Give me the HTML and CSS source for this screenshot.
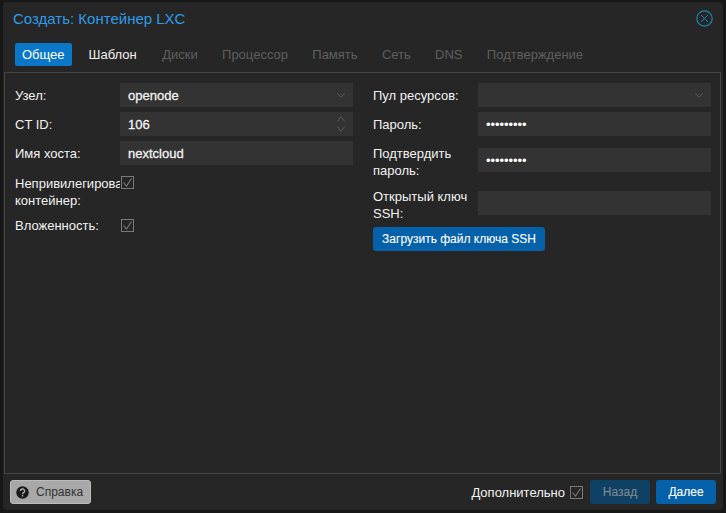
FILE: index.html
```html
<!DOCTYPE html>
<html lang="ru">
<head>
<meta charset="utf-8">
<title>Создать: Контейнер LXC</title>
<link rel="stylesheet" href="styles.css">
</head>
<body>
<div class="window">
  <header class="title-bar">
    <span class="title">Создать: Контейнер LXC</span>
    <svg class="close" width="17" height="17" viewBox="0 0 17 17" fill="none" stroke="#1c84b8" stroke-width="1.2"><circle cx="8.5" cy="8.5" r="7.7"/><path d="M5 5l7 7M12 5l-7 7" stroke-width="1"/></svg>
  </header>
  <nav class="tabs">
    <span class="tab active">Общее</span>
    <span class="tab enabled">Шаблон</span>
    <span class="tab">Диски</span>
    <span class="tab">Процессор</span>
    <span class="tab">Память</span>
    <span class="tab">Сеть</span>
    <span class="tab">DNS</span>
    <span class="tab">Подтверждение</span>
  </nav>
  <main class="panel">
    <section class="col">
      <div class="row"><label class="label">Узел:</label><div class="field"><span class="value">openode</span>
        <svg class="chev" width="8" height="5" viewBox="0 0 8 5" fill="none" stroke="#5c5c5c"><path d="M.3.3L4 4.3 7.7.3"/></svg></div></div>
      <div class="row"><label class="label">CT ID:</label><div class="field"><span class="value">106</span>
        <svg class="spin" width="8" height="16" viewBox="0 0 8 16" fill="none" stroke="#5c5c5c"><path d="M.3 5.5L4 .8l3.7 4.7M.3 10.5L4 15.2l3.7-4.7"/></svg></div></div>
      <div class="row"><label class="label">Имя хоста:</label><div class="field"><span class="value">nextcloud</span></div></div>
      <div class="row row-tall"><label class="label clip">Непривилегированный контейнер:</label>
        <svg class="check" width="13" height="13" viewBox="0 0 13 13" fill="none" stroke="#7a7a7a"><rect x=".5" y=".5" width="12" height="12"/><path d="M2.5 6.5l3 3.5 5-7.5" stroke-width="1.1"/></svg></div>
      <div class="row row-check"><label class="label">Вложенность:</label>
        <svg class="check" width="13" height="13" viewBox="0 0 13 13" fill="none" stroke="#7a7a7a"><rect x=".5" y=".5" width="12" height="12"/><path d="M2.5 6.5l3 3.5 5-7.5" stroke-width="1.1"/></svg></div>
    </section>
    <section class="col">
      <div class="row"><label class="label">Пул ресурсов:</label><div class="field">
        <svg class="chev" width="8" height="5" viewBox="0 0 8 5" fill="none" stroke="#5c5c5c"><path d="M.3.3L4 4.3 7.7.3"/></svg></div></div>
      <div class="row"><label class="label">Пароль:</label><div class="field"><span class="dots">•••••••••</span></div></div>
      <div class="row row-wrap"><label class="label">Подтвердить пароль:</label><div class="field"><span class="dots">•••••••••</span></div></div>
      <div class="row row-wrap"><label class="label">Открытый ключ SSH:</label><div class="field"></div></div>
      <button class="btn upload">Загрузить файл ключа SSH</button>
    </section>
  </main>
  <footer class="footer">
    <button class="help">
      <svg width="13" height="13" viewBox="0 0 13 13"><circle cx="6.5" cy="6.5" r="6.2" fill="#1a1a1a"/><path d="M4.4 5.1a2.1 2 0 1 1 3.2 1.6c-.8.5-1.1.8-1.1 1.5" fill="none" stroke="#b0b0b0" stroke-width="1.4"/><rect x="5.8" y="9" width="1.4" height="1.5" fill="#b0b0b0"/></svg>
      <span>Справка</span>
    </button>
    <span class="advanced">Дополнительно</span>
    <svg class="check" width="13" height="13" viewBox="0 0 13 13" fill="none" stroke="#7a7a7a"><rect x=".5" y=".5" width="12" height="12"/><path d="M2.5 6.5l3 3.5 5-7.5" stroke-width="1.1"/></svg>
    <button class="btn nav disabled">Назад</button>
    <button class="btn nav">Далее</button>
  </footer>
</div>
</body>
</html>
```
FILE: styles.css
```css
* { box-sizing: border-box; }
html, body { margin: 0; height: 100%; }
body {
  background: #171717;
  font: 13px/17px "Liberation Sans", Arial, sans-serif;
  color: #f2f2f2;
  padding: 2px 3px 3px 3px;
  overflow: hidden;
}
.window {
  height: 508px;
  background: #262626;
  border-radius: 4px;
  display: flex;
  flex-direction: column;
}
.title-bar {
  height: 37px;
  padding: 0 10px 4px 10px;
  display: flex;
  align-items: center;
  justify-content: space-between;
}
.title { font-size: 15px; color: #2f9be8; }
.tabs {
  height: 34px;
  padding: 4px 0 0 12px;
  margin: 0 2px 0 1px;
  display: flex;
  border-bottom: 1px solid #444;
}
.tab {
  height: 23px;
  line-height: 23px;
  padding: 0 7px;
  margin-right: 10.3px;
  color: #5f5f5f;
  border-radius: 2px;
}
.tab.active { background: #0a77c9; color: #fff; margin-right: 10px; margin-left: -1px; }
.tab.enabled { color: #f2f2f2; margin-right: 11.5px; }
.panel {
  flex: 1;
  margin: 0 2px 0 1px;
  border-left: 1px solid #444;
  border-right: 1px solid #444;
  padding: 10px 0 0 10px;
  display: grid;
  grid-template-columns: 338px 338px;
  column-gap: 20px;
  align-content: start;
}
.col { display: flex; flex-direction: column; gap: 5px; align-items: flex-start; min-width: 0; }
.row { display: flex; width: 100%; min-height: 24px; align-items: center; }
.label { width: 105px; flex: none; display: block; }
.clip { overflow: hidden; }
.field {
  flex: 1;
  height: 24px;
  background: #333;
  display: flex;
  align-items: center;
  justify-content: space-between;
  padding: 0 8px;
}
.value { color: #f2f2f2; -webkit-text-stroke: .3px #f2f2f2; }
.dots { letter-spacing: -.05px; color: #fff; }
.chev { margin-left: auto; }
.row-tall { align-items: flex-start; min-height: 34px; margin-top: 5px; }
.row-tall .check { margin: 1px 0 0 1px; }
.row-check { margin-top: -1px; }
.row-check .check { margin-left: 1px; }
.row-wrap { align-items: flex-start; min-height: 34px; margin-top: 4px; }
.row-wrap .field { margin-top: 3px; }
.check { flex: none; }
.btn {
  font: inherit;
  font-size: 12px;
  color: #fff;
  background: #0461aa;
  border: 0;
  border-radius: 3px;
  padding: 0;
  -webkit-text-stroke: .1px currentColor;
}
.upload { width: 172px; height: 24px; }
.footer {
  height: 37px;
  margin: 0 2px 0 1px;
  border-top: 1px solid #444;
  display: flex;
  align-items: center;
  padding: 0 5px 0 6px;
}
.help {
  width: 81px;
  height: 24px;
  background: #a8a8a8;
  border: 1px solid #bdbdbd;
  border-radius: 3px;
  font: inherit;
  font-size: 12px;
  color: #333;
  display: flex;
  align-items: center;
  gap: 7px;
  padding: 0 0 0 5px;
  margin-right: auto;
}
.advanced { margin-right: 5px; }
.nav { width: 60px; height: 24px; }
.disabled { background: #0f4165; color: #7f8a92; margin-left: 7px; margin-right: 6px; }
```
